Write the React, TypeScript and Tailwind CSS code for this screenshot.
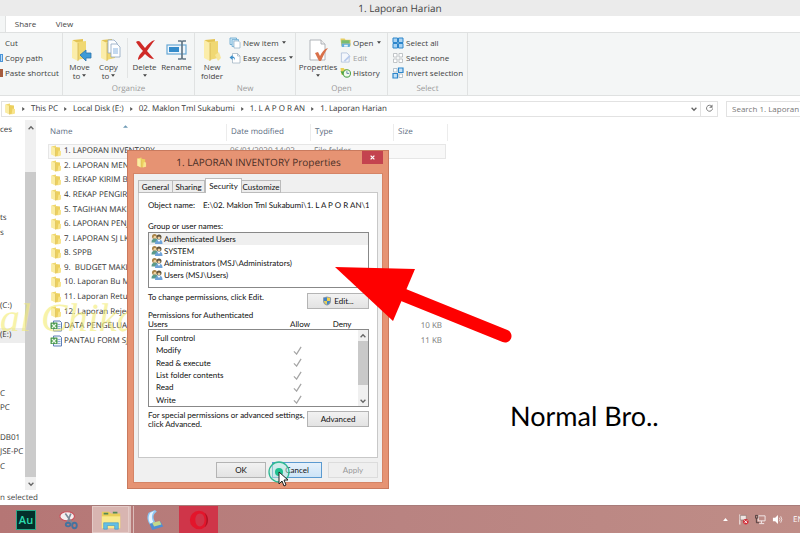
import type { ReactNode } from "react";

const folders = [
  "1. LAPORAN INVENTORY",
  "2. LAPORAN MENTAH",
  "3. REKAP KIRIM BARANG",
  "4. REKAP PENGIRIMAN",
  "5. TAGIHAN MAKLON",
  "6. LAPORAN PENJUALAN",
  "7. LAPORAN SJ LKL",
  "8. SPPB",
  "9.  BUDGET MAKLON",
  "10. Laporan Bu Mira",
  "11. Laporan Retur",
  "12. Laporan Reject",
];

const sheets = [
  { name: "DATA PENGELUARAN", size: "10 KB" },
  { name: "PANTAU FORM SJ", size: "11 KB" },
];

// 25 rows of the tree, scrolled sideways so only the tail of each name shows
const navRows = [
  "ces", "", "", "", "", "", "ts", "s", "", "", "", "", "(C:)",
  "", "(E:)", "", "", "", "C", "PC", "", "DB01", "JSE-PC", "C", "",
];

const crumbs = [
  "This PC",
  "Local Disk (E:)",
  "02. Maklon Tml Sukabumi",
  "1. L A P O R AN",
  "1. Laporan Harian",
];

const users = [
  "Authenticated Users",
  "SYSTEM",
  "Administrators (MSJ\\Administrators)",
  "Users (MSJ\\Users)",
];

const permissions = [
  { name: "Full control", allow: false },
  { name: "Modify", allow: true },
  { name: "Read & execute", allow: true },
  { name: "List folder contents", allow: true },
  { name: "Read", allow: true },
  { name: "Write", allow: true },
];

const FolderIcon = ({ className = "h-3 w-3" }: { className?: string }) => (
  <svg viewBox="0 0 24 24" className={`shrink-0 ${className}`}>
    <path d="M3 3l9-2v21l-9-3z" fill="#f0d86f" />
    <path d="M11 4l9 1v16l-9 2z" fill="#ecd05f" />
    <path d="M3 3l8 3v17l-8-4z" fill="#fbeda3" />
    <path d="M17 11l5 1v9l-7 2z" fill="#f8e48c" />
    <path d="M11 6v17" stroke="#d1b049" strokeWidth="1" />
  </svg>
);

const BigFolder = ({ children }: { children?: ReactNode }) => (
  <svg viewBox="0 0 24 24" className="h-6 w-6">
    <path d="M5 2l10-1v19l-6 2z" fill="#e3c455" />
    <path d="M9 4l9-1v17l-9 2z" fill="#f0d873" />
    <path d="M4 2l6 3v18l-6-3z" fill="#fbedaa" />
    <path d="M10 5v18" stroke="#d3b550" strokeWidth=".8" />
    {children}
  </svg>
);

const SheetIcon = () => (
  <svg viewBox="0 0 24 24" className="h-3 w-3 shrink-0">
    <path d="M7 2h13l3 3v17H7z" fill="#eef4fb" stroke="#5f7fb8" strokeWidth="2" />
    <path d="M15 9h6M15 13h6M15 17h6" stroke="#7c9fd0" strokeWidth="1.6" />
    <rect x="1" y="5" width="14" height="13" rx="1" fill="#4d9a50" />
    <path d="M4 8l8 8M12 8l-8 8" stroke="#e9f7e6" strokeWidth="2.4" />
  </svg>
);

const Caret = () => (
  <svg viewBox="0 0 6 4" className="h-[3px] w-1 shrink-0">
    <path d="M0 0h6L3 4z" fill="#444" />
  </svg>
);

const Chevron = ({ up = false }: { up?: boolean }) => (
  <svg viewBox="0 0 10 10" className="h-[6px] w-[6px]">
    <path
      d={up ? "M1 7l4-4 4 4" : "M1 3l4 4 4-4"}
      fill="none"
      stroke="#666"
      strokeWidth="2.2"
    />
  </svg>
);

const UsersIcon = () => (
  <svg viewBox="0 0 24 24" className="h-3 w-3 shrink-0">
    <circle cx="7" cy="7" r="5" fill="#a98245" />
    <circle cx="8" cy="8.5" r="3" fill="#efd1a0" />
    <path d="M1 19c0-6 3-8 7-8s6 3 6 8z" fill="#5b9a8a" />
    <circle cx="16" cy="8" r="5" fill="#5f533c" />
    <circle cx="16" cy="10" r="3" fill="#eccb98" />
    <path d="M8 22c0-6 3-9 8-9s7 3 7 9z" fill="#6fa3d8" />
    <path d="M13 14l3 4 3-4z" fill="#fff" />
  </svg>
);

const ShieldIcon = () => (
  <svg viewBox="0 0 20 20" className="h-[10px] w-[10px]">
    <path d="M10 1l8 2v7c0 5-4 8-8 9-4-1-8-4-8-9V3z" fill="#8c9aa8" />
    <path d="M10 3v7H4V4z" fill="#3f83c8" />
    <path d="M10 3v7h6V4z" fill="#f0d04b" />
    <path d="M10 10v7c-3-1-6-4-6-7z" fill="#e4cf58" />
    <path d="M10 10v7c3-1 6-4 6-7z" fill="#3f83c8" />
  </svg>
);

const LargeButton = ({
  icon,
  lines,
  caret = false,
  className,
}: {
  icon: ReactNode;
  lines: string[];
  caret?: boolean;
  className: string;
}) => (
  <button className={`flex flex-col items-center pt-[3px] ${className}`}>
    {icon}
    {lines.map((line, i) => (
      <span key={line} className="flex h-[9px] items-center gap-[2px] whitespace-nowrap">
        {line}
        {caret && lines.length > 1 && i === lines.length - 1 && <Caret />}
      </span>
    ))}
    {caret && lines.length === 1 && (
      <span className="flex h-2 items-center">
        <Caret />
      </span>
    )}
  </button>
);

const SmallButton = ({
  icon,
  label,
  caret = false,
  muted = false,
}: {
  icon?: ReactNode;
  label: string;
  caret?: boolean;
  muted?: boolean;
}) => (
  <button
    className={`flex h-[15px] items-center gap-[2px] whitespace-nowrap ${muted ? "text-[#a0a0a0]" : ""}`}
  >
    {icon}
    {label}
    {caret && (
      <span className="pl-px">
        <Caret />
      </span>
    )}
  </button>
);

const Group = ({
  label,
  className,
  children,
}: {
  label: string;
  className: string;
  children: ReactNode;
}) => (
  <section className={`flex shrink-0 flex-col border-r border-[#e0e2e2] ${className}`}>
    <div className="flex h-[49px] items-start pt-[2px]">{children}</div>
    <h2 className="flex h-[13px] items-center justify-center text-[#9a9a9a]">{label}</h2>
  </section>
);

const Ribbon = () => (
  <div className="flex h-16 shrink-0 overflow-hidden border-y border-[#dfe1e1] bg-[#f4f6f6] text-[8px] text-[#3f3f3f]">
    <Group label="" className="w-[63px]">
      <div className="flex flex-col">
        <SmallButton icon={<span className="w-[3px]" />} label="Cut" />
        <SmallButton icon={<span className="h-2 w-[3px] border border-[#4b95d8] bg-[#bcdcf7]" />} label="Copy path" />
        <SmallButton icon={<span className="h-2 w-[3px] bg-[#a55b3d]" />} label="Paste shortcut" />
      </div>
    </Group>
    <Group label="Organize" className="w-[132px]">
      <LargeButton
        className="ml-[2px] w-[29px]"
        lines={["Move", "to"]}
        caret
        icon={
          <BigFolder>
            <path d="M12 17l6-5v3h5v5h-5v3z" fill="#3f9bd6" stroke="#2b75ad" strokeWidth=".8" />
          </BigFolder>
        }
      />
      <LargeButton
        className="w-[29px]"
        lines={["Copy", "to"]}
        caret
        icon={
          <BigFolder>
            <path d="M11 2h6l3 3v10h-9z" fill="#fdfeff" stroke="#8ea6c0" strokeWidth=".8" />
            <path d="M14 6h6l3 3v10h-9z" fill="#fdfeff" stroke="#8ea6c0" strokeWidth=".8" />
            <path d="M16 11h5M16 13h5M16 15h5" stroke="#6ba1d8" strokeWidth=".8" />
          </BigFolder>
        }
      />
      <span className="mx-1 mt-[3px] h-10 w-px bg-[#e2e4e4]" />
      <LargeButton
        className="w-[25px]"
        lines={["Delete"]}
        caret
        icon={
          <svg viewBox="0 0 24 24" className="h-6 w-6">
            <path d="M3 4c2-2 4-1 5 1l4 5c3-4 6-7 10-8-3 3-5 7-8 11l7 8c-3 0-6-2-9-5-2 2-3 4-7 6 0-4 3-7 5-9-3-3-5-6-7-9z" fill="#cf2a27" />
          </svg>
        }
      />
      <LargeButton
        className="ml-1 w-[31px]"
        lines={["Rename"]}
        icon={
          <svg viewBox="0 0 24 24" className="h-6 w-6">
            <rect x="2" y="7" width="19" height="9" fill="#eef6fc" stroke="#68a8d4" strokeWidth="1.2" />
            <rect x="4" y="9" width="10" height="5" fill="#348bca" />
            <path d="M13 3h3l1 1 1-1h3M17 4v16M13 21h3l1-1 1 1h3" fill="none" stroke="#637786" strokeWidth="1.7" />
          </svg>
        }
      />
    </Group>
    <Group label="New" className="w-[101px]">
      <LargeButton
        className="ml-[2px] w-[30px]"
        lines={["New", "folder"]}
        icon={
          <BigFolder>
            <path d="M15 17l4-3 2 6-3 3z" fill="#f7e69a" />
          </BigFolder>
        }
      />
      <div className="ml-[2px] flex flex-col">
        <SmallButton
          label="New item"
          caret
          icon={
            <svg viewBox="0 0 24 24" className="h-3 w-3">
              <path d="M2 2h13v13H2z" fill="#d9edf9" stroke="#559dc9" strokeWidth="1.5" />
              <path d="M6 5h13v14H6z" fill="#c9e3f4" stroke="#6bacd2" strokeWidth="1.5" />
              <path d="M10 8h9l3 3v11H10z" fill="#fff" stroke="#87a7bf" strokeWidth="1.3" />
            </svg>
          }
        />
        <SmallButton
          label="Easy access"
          caret
          icon={
            <svg viewBox="0 0 24 24" className="h-3 w-3">
              <path d="M7 3h10l5 5v14H7z" fill="#fff" stroke="#93a8ba" strokeWidth="1.3" />
              <path d="M17 3v5h5" fill="none" stroke="#93a8ba" strokeWidth="1.3" />
              <path d="M12 17c0-5-1-8-5-8V6L1 11l6 5v-4c2 0 4 1 5 5z" fill="#3d90cc" />
            </svg>
          }
        />
      </div>
    </Group>
    <Group label="Open" className="w-[92px]">
      <LargeButton
        className="ml-1 w-9"
        lines={["Properties"]}
        caret
        icon={
          <svg viewBox="0 0 24 24" className="h-6 w-6">
            <path d="M4 2h11l4 4v16H4z" fill="#fff" stroke="#a8adb2" strokeWidth=".9" />
            <path d="M15 2v4h4" fill="#eee" stroke="#a8adb2" strokeWidth=".9" />
            <path d="M9 15l3-1 2 4c2-4 4-7 8-8-3 4-5 8-7 13h-2z" fill="#d9714a" />
          </svg>
        }
      />
      <div className="ml-1 flex flex-col">
        <SmallButton
          label="Open"
          caret
          icon={
            <svg viewBox="0 0 24 24" className="h-[11px] w-[11px]">
              <path d="M1 3h9l2 3h11v14H3z" fill="#e5cd62" />
              <path d="M3 7h18v7H3z" fill="#79bd71" />
              <path d="M3 14h20l-2 8H4z" fill="#63aeda" />
              <path d="M9 17h8v4H9z" fill="#e9f5fa" />
            </svg>
          }
        />
        <SmallButton
          label="Edit"
          muted
          icon={
            <svg viewBox="0 0 24 24" className="h-[11px] w-[11px]">
              <path d="M3 2h12l5 5v15H3z" fill="#f4f7fc" stroke="#a2b5d3" strokeWidth="1.5" />
              <path d="M8 19l12-12 3 3-12 11z" fill="#b8caec" />
            </svg>
          }
        />
        <SmallButton
          label="History"
          icon={
            <svg viewBox="0 0 24 24" className="h-[11px] w-[11px]">
              <path d="M1 2h7l2 3h7v12H3z" fill="#e8d257" />
              <circle cx="15" cy="14" r="8" fill="#f2faee" stroke="#55a752" strokeWidth="2.4" />
              <path d="M15 9v5h5" fill="none" stroke="#48739e" strokeWidth="1.8" />
              <path d="M1 9l7 1-2 8z" fill="#4fa548" />
            </svg>
          }
        />
      </div>
    </Group>
    <Group label="Select" className="w-20">
      <div className="ml-1 flex flex-col">
        <SmallButton
          label="Select all"
          icon={
            <svg viewBox="0 0 24 24" className="h-3 w-3">
              <path d="M2 2h9v9H2zM13 2h9v9h-9zM2 13h9v9H2zM13 13h9v9h-9z" fill="#a9d3f3" stroke="#2d86cb" strokeWidth="2" />
            </svg>
          }
        />
        <SmallButton
          label="Select none"
          icon={
            <svg viewBox="0 0 24 24" className="h-3 w-3">
              <path d="M3 3h7v7H3zM14 3h7v7h-7zM3 14h7v7H3zM14 14h7v7h-7z" fill="#fff" stroke="#aeb3b7" strokeWidth="1.5" />
            </svg>
          }
        />
        <SmallButton
          label="Invert selection"
          icon={
            <svg viewBox="0 0 24 24" className="h-3 w-3">
              <path d="M3 3h7v7H3zM14 14h7v7h-7z" fill="#fff" stroke="#9fb2c0" strokeWidth="1.5" />
              <path d="M13 2h9v9h-9zM2 13h9v9H2z" fill="#c4e2f8" stroke="#2d86cb" strokeWidth="2.4" />
            </svg>
          }
        />
      </div>
    </Group>
  </div>
);

const AddressBar = () => (
  <div className="flex h-6 shrink-0 items-center overflow-hidden pt-px pl-px text-[8px] text-[#333]">
    <nav className="flex h-4 min-w-0 flex-1 items-center border border-[#e2e2e2] pl-[2px]">
      <FolderIcon />
      {crumbs.map((crumb) => (
        <span key={crumb} className="flex items-center whitespace-nowrap">
          <svg viewBox="0 0 4 6" className="mx-[6px] h-1 w-[3px]">
            <path d="M0 0l4 3-4 3z" fill="#555" />
          </svg>
          <a href="#">{crumb}</a>
        </span>
      ))}
      <button className="mr-[3px] ml-auto" aria-label="Previous locations">
        <Chevron />
      </button>
    </nav>
    <button
      className="flex h-4 w-[17px] items-center justify-center border border-l-0 border-[#e2e2e2]"
      aria-label="Refresh"
    >
      <svg viewBox="0 0 24 24" className="h-[9px] w-[9px]">
        <path d="M18 6a8 8 0 1 0 2 6" fill="none" stroke="#777" strokeWidth="2.5" />
        <path d="M20 1v9h-9z" fill="#777" />
      </svg>
    </button>
    <div className="ml-2 h-4 w-[74px] overflow-hidden border border-r-0 border-[#e2e2e2]">
      <input
        aria-label="Search"
        placeholder="Search 1. Laporan Harian"
        className="h-full w-40 pl-[5px] outline-none placeholder:text-[#777]"
      />
    </div>
  </div>
);

const columnHead = "flex h-[17px] items-center border-l border-[#ececec] pl-1 text-left font-normal";

const FileList = () => (
  <table className="block min-w-0 flex-1 overflow-hidden pl-3 text-[8px] text-[#333]">
    <thead className="block">
      <tr className="flex h-6 items-center text-[#5b6b80]">
        <th className="w-[178px] pl-[2px] text-left font-normal">
          <span className="flex items-center gap-[51px]">
            Name
            <svg viewBox="0 0 6 3" className="mb-3 h-[3px] w-[5px]">
              <path d="M0 3l3-3 3 3z" fill="#6d9ab5" />
            </svg>
          </span>
        </th>
        <th className={`w-[84px] ${columnHead}`}>Date modified</th>
        <th className={`w-[83px] ${columnHead}`}>Type</th>
        <th className={`w-[55px] border-r ${columnHead}`}>Size</th>
      </tr>
    </thead>
    <tbody className="grid h-[204px] auto-rows-fr">
      {folders.map((name, i) => (
        <tr
          key={name}
          className={`flex w-[398px] items-center border ${i === 0 ? "border-[#e6e6e6] bg-[#f8f8f8]" : "border-transparent"}`}
        >
          <td className="flex w-[181px] items-center gap-[2px] pl-px whitespace-pre">
            <FolderIcon />
            {name}
          </td>
          <td className="w-[84px] text-[#777]">{i === 0 ? "06/01/2020 14:02" : ""}</td>
          <td className="text-[#777]">{i === 0 ? "File folder" : ""}</td>
        </tr>
      ))}
      {sheets.map(({ name, size }) => (
        <tr key={name} className="flex w-[398px] items-center border border-transparent">
          <td className="flex w-[345px] items-center gap-[2px] pl-px">
            <SheetIcon />
            {name}
          </td>
          <td className="w-12 text-right text-[#777]">{size}</td>
        </tr>
      ))}
    </tbody>
  </table>
);

const buttonStyle =
  "flex h-4 items-center justify-center gap-[2px] border border-[#b4b4b4] bg-linear-to-b from-[#f2f2f2] to-[#e3e3e3]";

const PropertiesDialog = () => (
  <div
    role="dialog"
    aria-label="1. LAPORAN INVENTORY Properties"
    className="absolute top-[150px] left-[127px] flex w-[262px] flex-col border border-[#c97a5e] bg-[#e69373] px-[5px] pb-[5px] font-['Lato',sans-serif] text-[8px] text-[#111]"
  >
    <header className="flex h-[22px] items-center pl-[3px] font-['Open_Sans',sans-serif]">
      <FolderIcon className="h-[11px] w-[11px]" />
      <h1 className="flex-1 pl-2 text-center text-[10px] text-[#4a2f26]">1. LAPORAN INVENTORY Properties</h1>
      <button
        aria-label="Close"
        className="flex h-[13px] w-[21px] items-center justify-center self-start bg-[#c4434f]"
      >
        <svg viewBox="0 0 8 8" className="h-[5px] w-[5px]">
          <path d="M1 1l6 6M7 1L1 7" stroke="#fff" strokeWidth="2" />
        </svg>
      </button>
    </header>
    <div className="flex flex-col border border-[#d58466] bg-[#f0f0f0] px-1 pt-1 pb-1">
      <div role="tablist" className="z-10 -mb-px flex items-end">
        <button role="tab" className="h-[13px] w-[35px] border border-[#bbb] bg-[#ededed]">General</button>
        <button role="tab" className="h-[13px] w-8 border border-l-0 border-[#bbb] bg-[#ededed]">Sharing</button>
        <button role="tab" aria-selected="true" className="h-[15px] w-[37px] border border-b-0 border-[#bbb] bg-white">
          Security
        </button>
        <button role="tab" className="h-[13px] w-[39px] border border-l-0 border-[#bbb] bg-[#ededed]">Customize</button>
      </div>
      <div className="flex h-[266px] flex-col border border-[#c8c8c8] bg-white pr-2 pl-[9px]">
        <div className="mt-[6px] flex h-3 items-center overflow-hidden whitespace-nowrap">
          <span className="w-[55px] shrink-0">Object name:</span>
          <span className="overflow-hidden">E:\02. Maklon Tml Sukabumi\1. L A P O R AN\1. L</span>
        </div>
        <span className="mt-[9px] h-3 leading-3">Group or user names:</span>
        <ul className="h-14 border border-[#888]">
          {users.map((user, i) => (
            <li key={user} className={`flex h-3 items-center gap-px pl-[2px] ${i === 0 ? "bg-[#efefef]" : ""}`}>
              <UsersIcon />
              {user}
            </li>
          ))}
        </ul>
        <div className="mt-[5px] flex items-start justify-between">
          <span>To change permissions, click Edit.</span>
          <button className={`w-[62px] ${buttonStyle}`}>
            <ShieldIcon />
            Edit...
          </button>
        </div>
        <div className="relative">
          <table className="block">
            <thead className="block">
              <tr className="flex h-5 items-end leading-[9px]">
                <th className="w-[134px] text-left font-normal">
                  Permissions for Authenticated
                  <br />
                  Users
                </th>
                <th className="w-9 text-center font-normal">Allow</th>
                <th className="w-12 text-center font-normal">Deny</th>
              </tr>
            </thead>
            <tbody className="grid h-[78px] auto-rows-fr border border-[#888] pt-[2px]">
              {permissions.map(({ name, allow }) => (
                <tr key={name} className="flex items-center">
                  <td className="w-[130px] pl-[7px]">{name}</td>
                  <td className="flex w-9 justify-center">
                    {allow && (
                      <svg viewBox="0 0 10 10" className="h-[9px] w-[9px]">
                        <path d="M1 6l3 3 5-8" fill="none" stroke="#a5a5a5" strokeWidth="1.4" />
                      </svg>
                    )}
                  </td>
                  <td className="w-12" />
                </tr>
              ))}
            </tbody>
          </table>
          <div className="absolute right-px bottom-px flex h-[76px] w-[10px] flex-col items-center bg-[#f0f0f0]">
            <span className="flex h-[11px] items-center"><Chevron up /></span>
            <span className="h-[44px] w-full bg-[#c9c9c9]" />
            <span className="mt-auto flex h-[11px] items-center"><Chevron /></span>
          </div>
        </div>
        <div className="mt-[4px] flex justify-between">
          <p className="leading-[9px] whitespace-nowrap">
            For special permissions or advanced settings,
            <br />
            click Advanced.
          </p>
          <button className={`w-[62px] shrink-0 ${buttonStyle}`}>Advanced</button>
        </div>
      </div>
      <div className="mt-1 flex justify-end gap-[6px]">
        <button className={`w-[50px] ${buttonStyle}`}>OK</button>
        <button className="flex h-4 w-[50px] items-center justify-center border border-[#5b9ad0] bg-linear-to-b from-[#e6f1fb] to-[#cde4f7]">
          Cancel
        </button>
        <button className="flex h-4 w-[50px] items-center justify-center border border-[#dcdcdc] bg-[#efefef] text-[#999]">
          Apply
        </button>
      </div>
    </div>
  </div>
);

const Taskbar = () => (
  <footer className="flex h-7 shrink-0 items-center border-t border-[#a87c7a] bg-linear-to-r from-[#b57675] via-[#b98381] to-[#bf8d87] text-[8px] text-white">
    <button
      aria-label="Audition"
      className="ml-4 flex h-5 w-5 items-center justify-center border border-[#2ba888] bg-[#04302b] text-[11px] font-semibold text-[#2ddcb0]"
    >
      Au
    </button>
    <button aria-label="Snipping Tool" className="ml-[22px]">
      <svg viewBox="0 0 24 24" className="h-[22px] w-[22px]">
        <ellipse cx="10" cy="8" rx="8" ry="5" fill="#f5eeee" stroke="#c9505a" strokeWidth="1.3" />
        <path d="M8 5l8 11M14 5L10 15" stroke="#7d8b98" strokeWidth="1.8" />
        <ellipse cx="11" cy="17" rx="2.5" ry="2" fill="none" stroke="#44739f" strokeWidth="2" />
        <ellipse cx="18" cy="18" rx="2.5" ry="3" fill="none" stroke="#44739f" strokeWidth="2" />
      </svg>
    </button>
    <button
      aria-label="File Explorer"
      className="ml-3 flex h-[27px] w-[37px] items-center justify-center border border-[#e4cac7] bg-[#d8b5b1]"
    >
      <svg viewBox="0 0 24 24" className="h-[22px] w-[22px]">
        <path d="M2 3h8l2 2h10v16H2z" fill="#eace59" />
        <path d="M4 5h5M14 4h5" stroke="#548953" strokeWidth="2" />
        <path d="M2 8h20v13H2z" fill="#fae98c" />
        <path d="M4 22v-7h16v7h-4v-4H8v4z" fill="#62bfe6" stroke="#469ac1" strokeWidth=".7" />
      </svg>
    </button>
    <span className="h-[27px] w-[5px] border-r border-l-2 border-[#dabdba]" />
    <button aria-label="Scanner" className="ml-[10px]">
      <svg viewBox="0 0 24 24" className="h-[22px] w-[22px]">
        <path d="M5 4l7-3 2 2c-5 3-4 7-2 11l-5 4C3 12 3 8 5 4z" fill="#8cc6f3" />
        <path d="M7 4l5-2c-4 3-4 8-2 12l-3 2C4 11 5 7 7 4z" fill="#e7f4ff" />
        <path d="M6 16l12-2 3 5-12 4z" fill="#4f8ed3" />
        <path d="M9 15l8-2 2 4-8 2z" fill="#c3d98b" />
      </svg>
    </button>
    <button aria-label="Opera" className="ml-[13px] flex h-[27px] w-[39px] items-center justify-center bg-[#cf3549]">
      <svg viewBox="0 0 24 24" className="h-[22px] w-[22px]">
        <path
          fillRule="evenodd"
          d="M12 2a10 10 0 1 0 0 20a10 10 0 1 0 0-20zM13 5c3 0 5 3 5 7s-2 7-5 7-5-3-5-7 2-7 5-7z"
          fill="#e3152b"
        />
        <path d="M18 4c5 4 5 12 0 16 3-5 3-11 0-16z" fill="#a91323" />
      </svg>
    </button>
    <div className="ml-auto flex items-center gap-[6px]">
      <svg viewBox="0 0 8 5" className="mr-1 h-[3px] w-[5px]">
        <path d="M0 5l4-5 4 5z" fill="#fff" />
      </svg>
      <svg viewBox="0 0 24 24" className="h-[11px] w-[11px]">
        <path d="M4 1v22" stroke="#fff" strokeWidth="2" />
        <path d="M5 3h13v10H5z" fill="#efe4e2" stroke="#6e5a58" strokeWidth="1" />
        <circle cx="17" cy="17" r="6" fill="#d32e38" />
        <path d="M14 14l6 6M20 14l-6 6" stroke="#fff" strokeWidth="2" />
      </svg>
      <svg viewBox="0 0 24 24" className="h-[11px] w-[11px]">
        <path d="M7 4h15v11H7zM14 15v5M9 21h11" fill="none" stroke="#f5eded" strokeWidth="2" />
        <path d="M1 3h5v6H1zM3 9v10h6" fill="none" stroke="#4d3c3b" strokeWidth="2" />
      </svg>
      <svg viewBox="0 0 24 24" className="h-[11px] w-[11px]">
        <path d="M2 8h5l6-6v20l-6-6H2z" fill="#fff" />
        <path d="M16 8q3 4 0 8M19 5q5 7 0 14" fill="none" stroke="#fff" strokeWidth="1.5" />
      </svg>
      <span className="ml-1 w-[7px] overflow-hidden">EN</span>
    </div>
  </footer>
);

export default function App() {
  return (
    <main className="relative flex min-h-screen flex-col overflow-hidden bg-white font-['Open_Sans',sans-serif] leading-none [text-rendering:geometricPrecision]">
      <header className="flex h-4 shrink-0 items-center justify-center bg-[#ebebeb] text-[10px] text-[#444]">
        1. Laporan Harian
      </header>
      <div role="tablist" className="flex h-4 shrink-0 items-center text-[8px] text-[#444]">
        <span className="h-full w-[6px] border-r border-[#dfe1e1] bg-[#f4f6f6]" />
        <button role="tab" className="w-[39px]">Share</button>
        <button role="tab" className="w-[39px]">View</button>
      </div>
      <Ribbon />
      <AddressBar />

      <div className="flex flex-1">
        <aside className="flex w-9 shrink-0">
          <div className="grid flex-1 auto-rows-fr pt-[3px] pb-px text-[8px] text-[#333]">
            {navRows.map((row, i) => (
              <span
                key={i}
                className={`flex w-[25px] items-center overflow-hidden whitespace-nowrap ${row === "(E:)" ? "bg-[#ededed]" : ""}`}
              >
                {row}
              </span>
            ))}
          </div>
          <div className="flex w-[11px] flex-col items-center bg-[#f0f0f0]">
            <span className="flex h-4 items-center"><Chevron up /></span>
            <span className="mt-9 w-full flex-1 bg-[#cbcbcb]" />
            <span className="flex h-[13px] items-center"><Chevron /></span>
          </div>
        </aside>
        <FileList />
      </div>
      <div className="flex h-[15px] shrink-0 items-center text-[8px] text-[#444]">n selected</div>
      <Taskbar />

      <div className="pointer-events-none absolute top-[298px] left-0 font-['Liberation_Serif',serif] text-[40px] whitespace-nowrap text-[#f3ec72] italic opacity-60">
        al Chika
      </div>
      <PropertiesDialog />

      <svg viewBox="0 0 178 80" className="pointer-events-none absolute top-[265px] left-[334px] h-20 w-[178px]">
        <path d="M1 2L81 4 59 56z" fill="#fe0000" />
        <path d="M62 27L171 71" stroke="#fe0000" strokeWidth="13" strokeLinecap="round" />
      </svg>
      <p className="absolute top-[402px] left-[510px] font-['Lato',sans-serif] text-[27px] whitespace-nowrap text-black">
        Normal Bro..
      </p>

      <svg viewBox="0 0 24 28" className="pointer-events-none absolute top-[460px] left-[267px] h-7 w-6">
        <circle cx="12" cy="12" r="10" fill="#bfe9dc" fillOpacity=".5" stroke="#2fb893" strokeWidth="1.3" />
        <circle cx="12" cy="12" r="4" fill="#1fc090" />
        <path d="M12 12v12l3-3 2 5 2-1-2-5h4z" fill="#fff" stroke="#222" strokeWidth="1" />
      </svg>
    </main>
  );
}
